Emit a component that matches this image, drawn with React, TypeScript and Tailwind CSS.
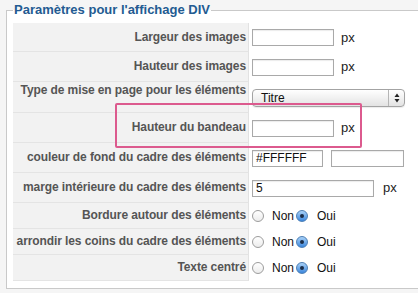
import React from "react";

const Input = ({ w, value = "" }: { w: number; value?: string }) => (
  <div
    className="h-[17px] border border-[#a9a9a9] bg-white px-[3px] text-[12px] leading-[15px] text-[#111] shadow-[inset_0_1px_1px_rgba(0,0,0,0.08)]"
    style={{ width: w }}
  >
    {value}
  </div>
);

const Px = ({ ml }: { ml: number }) => (
  <span className="text-[13px] text-[#222]" style={{ marginLeft: ml }}>
    px
  </span>
);

const Radio = ({ checked }: { checked?: boolean }) =>
  checked ? (
    <span className="flex h-[12px] w-[12px] items-center justify-center rounded-full border border-[#4d7fb5] bg-gradient-to-b from-[#a9d2f7] to-[#3a86dc]">
      <span className="h-[4px] w-[4px] rounded-full bg-[#1b2d48]" />
    </span>
  ) : (
    <span className="h-[12px] w-[12px] rounded-full border border-[#9c9c9c] bg-gradient-to-b from-white to-[#ececec]" />
  );

const Radios = () => (
  <div className="flex items-center text-[12px] text-[#111]">
    <Radio />
    <span className="ml-[8px]">Non</span>
    <span className="ml-[2px]">
      <Radio checked />
    </span>
    <span className="ml-[9px]">Oui</span>
  </div>
);

const Select = () => (
  <div className="mt-[7px] flex h-[18px] w-[153px] items-center rounded-[4px] border border-[#a3a3a3] bg-gradient-to-b from-white to-[#e3e3e3] shadow-[0_1px_1px_rgba(0,0,0,0.08)]">
    <span className="flex-1 pl-[8px] text-[12px] leading-[16px] text-[#111]">Titre</span>
    <span className="flex h-full w-[16px] items-center justify-center border-l border-[#b5b5b5]">
      <svg width="6" height="10" viewBox="0 0 6 10">
        <path d="M3 0.5 L5.5 4 L0.5 4 Z" fill="#222" />
        <path d="M3 9.5 L5.5 6 L0.5 6 Z" fill="#222" />
      </svg>
    </span>
  </div>
);

type Row = {
  label: string;
  h: number;
  top?: boolean;
  content: React.ReactNode;
};

const rows: Row[] = [
  {
    label: "Largeur des images",
    h: 29,
    content: (
      <>
        <Input w={82} />
        <Px ml={7} />
      </>
    ),
  },
  {
    label: "Hauteur des images",
    h: 30,
    content: (
      <>
        <Input w={82} />
        <Px ml={7} />
      </>
    ),
  },
  {
    label: "Type de mise en page pour les éléments",
    h: 31,
    top: true,
    content: <Select />,
  },
  {
    label: "Hauteur du bandeau",
    h: 30,
    content: (
      <>
        <Input w={82} />
        <Px ml={7} />
      </>
    ),
  },
  {
    label: "couleur de fond du cadre des éléments",
    h: 30,
    content: (
      <>
        <Input w={71} value="#FFFFFF" />
        <span className="ml-[8px]">
          <Input w={73} />
        </span>
      </>
    ),
  },
  {
    label: "marge intérieure du cadre des éléments",
    h: 30,
    content: (
      <>
        <Input w={122} value="5" />
        <Px ml={9} />
      </>
    ),
  },
  { label: "Bordure autour des éléments", h: 26, content: <Radios /> },
  { label: "arrondir les coins du cadre des éléments", h: 26, content: <Radios /> },
  { label: "Texte centré", h: 26, content: <Radios /> },
];

export default function App() {
  return (
    <div className="relative h-[293px] w-[418px] overflow-hidden bg-[#f5f5f5] pl-[6px] pt-[2px] font-['Liberation_Sans',Arial,sans-serif]">
      <fieldset className="w-[440px] border border-[#c9c9c9] bg-white pb-[7px] pl-[6px] pr-0 pt-[5px]">
        <legend className="px-[1px] text-[13px] font-bold leading-[16px] text-[#235b92]">
          Paramètres pour l'affichage DIV
        </legend>
        <div className="flex flex-col">
          {rows.map((r, i) => (
            <div key={i} className="flex" style={{ height: r.h }}>
              <div
                className={`flex w-[236px] shrink-0 justify-end whitespace-nowrap border-b border-r border-b-[#e4e4e4] border-r-[#e2e2e2] bg-[#f2f2f2] pr-[2px] text-right text-[12px] font-bold leading-[15px] tracking-[-0.1px] text-[#555] ${
                  r.top ? "items-start pt-[1px]" : "items-center"
                }`}
              >
                {r.label}
              </div>
              <div
                className={`flex flex-1 pl-[3px] ${r.top ? "items-start" : "items-center"}`}
              >
                {r.content}
              </div>
            </div>
          ))}
        </div>
      </fieldset>
      <div className="absolute left-[115px] top-[103px] h-[45px] w-[247px] rounded-[2px] border-2 border-[#dc5a8e]" />
    </div>
  );
}
